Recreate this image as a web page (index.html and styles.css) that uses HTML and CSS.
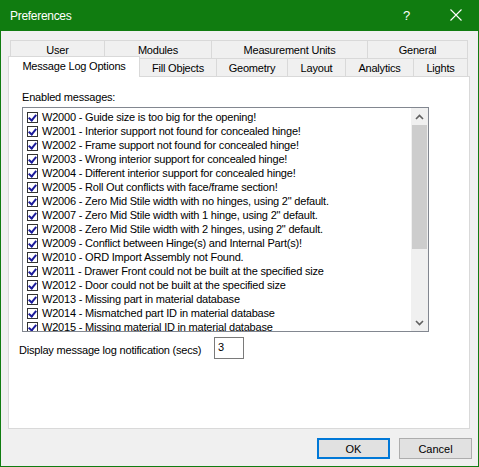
FILE: index.html
```html
<!DOCTYPE html>
<html>
<head>
<meta charset="utf-8">
<title>Preferences</title>
<link rel="stylesheet" href="styles.css">
</head>
<body>
<div class="window">
  <div class="titlebar">
    <span class="title">Preferences</span>
    <span class="help">?</span>
    <span class="close">
      <svg width="12" height="12" viewBox="0 0 12 12"><path d="M0.5 0.5 L11.5 11.5 M11.5 0.5 L0.5 11.5" stroke="#fff" stroke-width="1.1" fill="none"/></svg>
    </span>
  </div>
  <div class="content">
    <div class="tabs">
      <div class="tabrow back">
        <div class="tab t-user">User</div>
        <div class="tab t-modules">Modules</div>
        <div class="tab t-units">Measurement Units</div>
        <div class="tab t-general">General</div>
      </div>
      <div class="tabrow front">
        <div class="tab selected t-msg">Message Log Options</div>
        <div class="tab t-fill">Fill Objects</div>
        <div class="tab t-geo">Geometry</div>
        <div class="tab t-layout">Layout</div>
        <div class="tab t-analytics">Analytics</div>
        <div class="tab t-lights">Lights</div>
      </div>
    </div>
    <div class="panel">
      <div class="label">Enabled messages:</div>
      <div class="listbox">
        <div class="items">
          <div class="item"><span class="cb"></span>W2000 - Guide size is too big for the opening!</div>
          <div class="item"><span class="cb"></span>W2001 - Interior support not found for concealed hinge!</div>
          <div class="item"><span class="cb"></span>W2002 - Frame support not found for concealed hinge!</div>
          <div class="item"><span class="cb"></span>W2003 - Wrong interior support for concealed hinge!</div>
          <div class="item"><span class="cb"></span>W2004 - Different interior support for concealed hinge!</div>
          <div class="item"><span class="cb"></span>W2005 - Roll Out conflicts with face/frame section!</div>
          <div class="item"><span class="cb"></span>W2006 - Zero Mid Stile width with no hinges, using 2" default.</div>
          <div class="item"><span class="cb"></span>W2007 - Zero Mid Stile width with 1 hinge, using 2" default.</div>
          <div class="item"><span class="cb"></span>W2008 - Zero Mid Stile width with 2 hinges, using 2" default.</div>
          <div class="item"><span class="cb"></span>W2009 - Conflict between Hinge(s) and Internal Part(s)!</div>
          <div class="item"><span class="cb"></span>W2010 - ORD Import Assembly not Found.</div>
          <div class="item"><span class="cb"></span>W2011 - Drawer Front could not be built at the specified size</div>
          <div class="item"><span class="cb"></span>W2012 - Door could not be built at the specified size</div>
          <div class="item"><span class="cb"></span>W2013 - Missing part in material database</div>
          <div class="item"><span class="cb"></span>W2014 - Mismatched part ID in material database</div>
          <div class="item"><span class="cb"></span>W2015 - Missing material ID in material database</div>
        </div>
        <div class="scrollbar">
          <div class="arrow">
            <svg width="9" height="6" viewBox="0 0 9 6"><path d="M1 5 L4.5 1.5 L8 5" stroke="#606060" stroke-width="1.6" fill="none"/></svg>
          </div>
          <div class="track"><div class="thumb"></div></div>
          <div class="arrow">
            <svg width="9" height="6" viewBox="0 0 9 6"><path d="M1 1 L4.5 4.5 L8 1" stroke="#606060" stroke-width="1.6" fill="none"/></svg>
          </div>
        </div>
      </div>
      <div class="notify">
        <span class="notify-label">Display message log notification (secs)</span>
        <div class="textbox">3</div>
      </div>
    </div>
    <div class="buttons">
      <button class="btn default">OK</button>
      <button class="btn">Cancel</button>
    </div>
  </div>
</div>
</body>
</html>
```

FILE: styles.css
```css
* { box-sizing: border-box; }
html, body { margin: 0; padding: 0; background: #f0f0f0; }
body {
  font-family: "Liberation Sans", Arial, sans-serif;
  font-size: 11px;
  color: #000;
}
.window {
  width: 479px;
  height: 467px;
  border: 1px solid #107c10;
  background: #f0f0f0;
  display: flex;
  flex-direction: column;
}
.titlebar {
  height: 30px;
  background: #107c10;
  color: #fff;
  display: flex;
  align-items: center;
  flex: none;
}
.title {
  font-size: 12px;
  letter-spacing: -0.3px;
  margin-left: 9px;
  flex: 1;
  padding-bottom: 1px;
}
.help {
  font-size: 13px;
  width: 12px;
  margin-right: 35px;
  padding-bottom: 2px;
}
.close {
  display: flex;
  margin-right: 16px;
  padding-bottom: 2px;
}
.content {
  flex: 1;
  display: flex;
  flex-direction: column;
  padding: 9px 8px 0 7px;
}
.tabs { display: flex; flex-direction: column; }
.tabrow { display: flex; height: 18px; }
.tabrow.back { padding-left: 2px; }
.tab {
  flex: none;
  height: 18px;
  border: 1px solid #d9d9d9;
  border-bottom: none;
  border-right: none;
  background: #f0f0f0;
  display: flex;
  align-items: center;
  justify-content: center;
  line-height: 14px;
  padding-top: 1px;
  white-space: nowrap;
  letter-spacing: -0.2px;
}
.tabrow .tab:last-child { border-right: 1px solid #d9d9d9; }
.tab.selected {
  position: relative;
  z-index: 2;
  margin-top: -2px;
  height: 21px;
  background: #fff;
  border-right: 1px solid #d9d9d9;
  padding-bottom: 3px;
}
.t-user { width: 94px; }
.t-modules { width: 107px; }
.t-units { width: 156px; }
.t-general { width: 101px; }
.t-msg { width: 132px; }
.t-fill { width: 76px; border-left: none; }
.t-geo { width: 71px; }
.t-layout { width: 58px; }
.t-analytics { width: 68px; }
.t-lights { width: 55px; }

.panel {
  width: 462px;
  height: 353px;
  background: #fff;
  border: 1px solid #d9d9d9;
  padding: 13px 0 0 13px;
  display: flex;
  flex-direction: column;
}
.label {
  line-height: 14px;
  height: 14px;
  letter-spacing: -0.2px;
}
.listbox {
  margin-top: 3px;
  width: 407px;
  height: 225px;
  border: 1px solid #828790;
  display: flex;
  overflow: hidden;
}
.items {
  flex: 1;
  padding-top: 2px;
  overflow: hidden;
}
.item {
  height: 14px;
  line-height: 14px;
  display: flex;
  align-items: center;
  white-space: nowrap;
  letter-spacing: -0.2px;
}
.cb {
  width: 11px;
  height: 11px;
  border: 1px solid #333;
  background: #fff;
  margin-left: 4px;
  margin-right: 4px;
  flex: none;
  position: relative;
}
.cb::after {
  content: "";
  position: absolute;
  left: 2px;
  top: 0px;
  width: 3px;
  height: 6px;
  border: solid #1a1a9a;
  border-width: 0 2px 2px 0;
  transform: rotate(40deg);
}
.scrollbar {
  width: 17px;
  flex: none;
  background: #f0f0f0;
  display: flex;
  flex-direction: column;
}
.arrow {
  height: 17px;
  display: flex;
  align-items: center;
  justify-content: center;
  flex: none;
}
.track { flex: 1; }
.thumb {
  height: 124px;
  margin: 0 1px;
  background: #cdcdcd;
}
.notify {
  display: flex;
  align-items: flex-start;
  margin-top: 5px;
  margin-left: -3px;
}
.notify-label {
  margin-top: 6px;
  line-height: 14px;
  letter-spacing: -0.2px;
  width: 195px;
}
.textbox {
  width: 30px;
  height: 22px;
  border: 1px solid #7a7a7a;
  background: #fff;
  padding: 2px 0 0 3px;
  line-height: 14px;
}
.buttons {
  display: flex;
  justify-content: flex-end;
  gap: 9px;
  margin-top: 9px;
  margin-right: -2px;
}
.btn {
  width: 73px;
  height: 21px;
  font-family: "Liberation Sans", Arial, sans-serif;
  font-size: 11px;
  background: #e1e1e1;
  border: 1px solid #adadad;
  padding: 0;
  color: #000;
}
.btn.default { border: 2px solid #0078d7; }
```
